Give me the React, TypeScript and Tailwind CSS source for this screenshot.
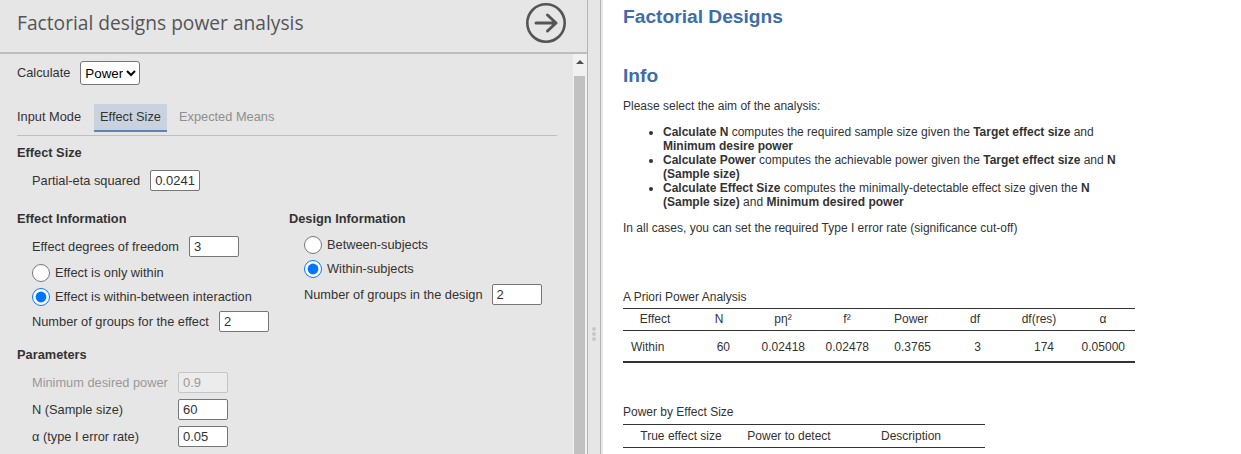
const sans = "[font-family:'Liberation_Sans',Arial,sans-serif]";

function NumberBox({ value, disabled }: { value: string; disabled?: boolean }) {
  return (
    <input
      readOnly
      value={value}
      disabled={disabled}
      className={
        disabled
          ? "w-[50px] h-[21px] px-[4px] text-[13px] rounded-[2px] border border-[#c4c4c4] bg-[#ececec] text-[#999]"
          : "w-[50px] h-[21px] px-[4px] text-[13px] rounded-[2px] border border-[#767676] bg-white text-[#333]"
      }
    />
  );
}

function Radio({ label, checked }: { label: string; checked?: boolean }) {
  return (
    <label className="flex items-center gap-[5px] h-[24px]">
      <input type="radio" readOnly checked={!!checked} className="w-[18px] h-[18px] m-0" />
      <span>{label}</span>
    </label>
  );
}

function LeftPanel() {
  return (
    <div className="w-[588px] shrink-0 h-full flex flex-col border-r border-[#b4b4b4] bg-[#e6e6e6] text-[12.8px] text-[#333]">
      <div className="h-[54px] shrink-0 flex items-center justify-between pl-[17px] pr-[20px] border-b-2 border-[#bdbdbd]">
        <div className="text-[19.2px] text-[#555] font-['Open_Sans',sans-serif] pb-[6px]">Factorial designs power analysis</div>
        <svg width="42" height="42" viewBox="0 0 42 42" className="mb-[6px]" fill="none" stroke="#555" strokeWidth="2.6">
          <circle cx="21" cy="21" r="18.7" />
          <path d="M11 21h20M22.500 13 31 21l-8.500 8" strokeWidth="3" strokeLinecap="round" strokeLinejoin="round" />
        </svg>
      </div>
      <div className="flex-1 flex min-h-0">
        <div className="flex-1 min-w-0 pl-[17px] pr-[16px] overflow-hidden">
          <div className="flex items-center gap-[10px] h-[24px] mt-[7px]">
            <span>Calculate</span>
            <select className="h-[24px] w-[60px] text-[13.333px] text-black bg-white border border-[#767676] rounded-[3px] appearance-auto">
              <option>Power</option>
            </select>
          </div>
          <div className="flex items-start h-[31px] mt-[19px] border-b border-[#bfbfbf] box-content">
            <div className="flex items-center pr-[13px] pb-[2px] h-[28px]">Input Mode</div>
            <div className="flex items-center px-[6px] bg-[#c9d3df] border-b-[2px] border-[#5d82b5] h-[28px]">Effect Size</div>
            <div className="flex items-center pl-[12px] pb-[2px] text-[#8f8f8f] h-[28px]">Expected Means</div>
          </div>

          <div className="font-bold mt-[9px] h-[16px] leading-[16px]">Effect Size</div>
          <div className="flex items-center gap-[10px] ml-[15px] mt-[9px] h-[21px]">
            <span>Partial-eta squared</span>
            <NumberBox value="0.0241" />
          </div>

          <div className="flex mt-[20px]">
            <div className="w-[272px] shrink-0">
              <div className="font-bold h-[16px] leading-[16px]">Effect Information</div>
              <div className="ml-[15px]">
                <div className="flex items-center gap-[10px] mt-[9px] h-[21px]">
                  <span>Effect degrees of freedom</span>
                  <NumberBox value="3" />
                </div>
                <div className="mt-[4px]">
                  <Radio label="Effect is only within" />
                  <Radio label="Effect is within-between interaction" checked />
                </div>
                <div className="flex items-center gap-[10px] mt-[2px] h-[21px]">
                  <span>Number of groups for the effect</span>
                  <NumberBox value="2" />
                </div>
              </div>
            </div>
            <div>
              <div className="font-bold h-[16px] leading-[16px]">Design Information</div>
              <div className="ml-[15px]">
                <div className="mt-[6px]">
                  <Radio label="Between-subjects" />
                  <Radio label="Within-subjects" checked />
                </div>
                <div className="flex items-center gap-[9px] mt-[3px] h-[21px]">
                  <span>Number of groups in the design</span>
                  <NumberBox value="2" />
                </div>
              </div>
            </div>
          </div>

          <div className="font-bold mt-[15px] h-[16px] leading-[16px]">Parameters</div>
          <div className="ml-[15px] mt-[9px] grid grid-cols-[146px_50px] gap-y-[6px] items-center">
            <span className="text-[#999]">Minimum desired power</span>
            <NumberBox value="0.9" disabled />
            <span>N (Sample size)</span>
            <NumberBox value="60" />
            <span>α (type I error rate)</span>
            <NumberBox value="0.05" />
          </div>
        </div>
        <div className="w-[14px] shrink-0 bg-[#f1f1f1] flex flex-col items-start">
          <div className="h-[22px] w-full flex items-start justify-center pt-[6px]">
            <div className="w-0 h-0 border-x-[4px] border-x-transparent border-b-[4px] border-b-[#505050]" />
          </div>
          <div className="w-[11px] ml-px flex-1 bg-[#c1c1c1]" />
        </div>
      </div>
    </div>
  );
}

function Splitter() {
  return (
    <div className="w-[13px] shrink-0 h-full bg-[#e6e6e6] border-r border-[#b4b4b4] flex flex-col items-center pt-[327px] gap-px">
      <div className="w-[4px] h-[4px] rounded-full bg-[#c8c8c8]" />
      <div className="w-[4px] h-[4px] rounded-full bg-[#c8c8c8]" />
      <div className="w-[4px] h-[4px] rounded-full bg-[#c8c8c8]" />
    </div>
  );
}

const powerCols = [
  { head: "Effect", cell: "Within", cellClass: "text-left pl-[8px]" },
  { head: "N", cell: "60", cellClass: "text-right pr-[21px]" },
  { head: "pη²", cell: "0.02418", cellClass: "text-right pr-[10px]" },
  { head: "f²", cell: "0.02478", cellClass: "text-right pr-[10px]" },
  { head: "Power", cell: "0.3765", cellClass: "text-right pr-[12px]" },
  { head: "df", cell: "3", cellClass: "text-right pr-[26px]" },
  { head: "df(res)", cell: "174", cellClass: "text-right pr-[17px]" },
  { head: "α", cell: "0.05000", cellClass: "text-right pr-[10px]" },
];

function Results() {
  return (
    <div className="flex-1 min-w-0 h-full bg-white border-l-2 border-[#e9e9e9] pl-[20px] text-[12px] text-[#333] overflow-hidden">
      <h1 className="text-[19.2px] leading-[22px] font-bold text-[#3e6da9] mt-[6px]">Factorial Designs</h1>
      <h1 className="text-[19.2px] leading-[22px] font-bold text-[#3e6da9] mt-[37px]">Info</h1>
      <p className="mt-[12px] leading-[14px]">Please select the aim of the analysis:</p>
      <ul className="list-disc pl-[40px] mt-[12px] w-[510px] leading-[14px]">
        <li>
          <b>Calculate N</b> computes the required sample size given the <b>Target effect size</b> and <b>Minimum desire power</b>
        </li>
        <li>
          <b>Calculate Power</b> computes the achievable power given the <b>Target effect size</b> and <b>N (Sample size)</b>
        </li>
        <li>
          <b>Calculate Effect Size</b> computes the minimally-detectable effect size given the <b>N (Sample size)</b> and <b>Minimum desired power</b>
        </li>
      </ul>
      <p className="mt-[12px] leading-[14px]">In all cases, you can set the required Type I error rate (significance cut-off)</p>

      <div className="mt-[55px] leading-[14px]">A Priori Power Analysis</div>
      <div className="w-[512px] mt-[4px] border-t border-[#333]">
        <div className="grid grid-cols-8 h-[22px] pb-px items-center border-b border-[#333]">
          {powerCols.map((c) => (
            <div key={c.head} className="text-center">{c.head}</div>
          ))}
        </div>
        <div className="grid grid-cols-8 h-[32px] pt-px items-center border-b-2 border-[#333]">
          {powerCols.map((c) => (
            <div key={c.head} className={c.cellClass}>{c.cell}</div>
          ))}
        </div>
      </div>

      <div className="mt-[42px] leading-[14px]">Power by Effect Size</div>
      <div className="w-[362px] mt-[5px] border-t border-[#333]">
        <div className="grid grid-cols-[116px_100px_144px] h-[23px] items-center border-b border-[#333] text-center">
          <div>True effect size</div>
          <div>Power to detect</div>
          <div>Description</div>
        </div>
      </div>
    </div>
  );
}

export default function App() {
  return (
    <div className={`flex w-[1241px] h-[454px] overflow-hidden ${sans}`}>
      <LeftPanel />
      <Splitter />
      <Results />
    </div>
  );
}
